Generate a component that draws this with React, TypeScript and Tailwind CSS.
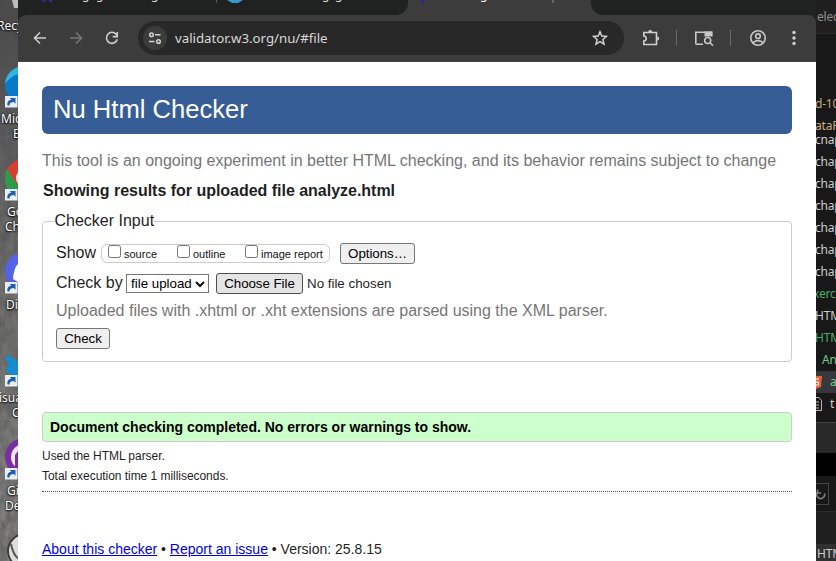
import type { ReactNode } from "react";

const arial = "font-['Liberation_Sans',Arial,sans-serif]";
const ui = "font-['Noto_Sans','Open_Sans',sans-serif]";

function Shortcut({ top, children, lines }: { top: number; children?: ReactNode; lines: { t: string; x: number; y: number }[] }) {
  return (
    <div className="absolute left-0 w-20" style={{ top }}>
      <svg className="absolute left-[5px] top-0 h-[44px] w-[40px]" viewBox="0 0 40 44">
        {children}
        <rect x="0" y="30" width="12.5" height="11.5" fill="#e8eef4" />
        <path d="M2.500 39.500c-.8-3.500 1-5.500 3.800-5.500L4.800 32h5.700v5.700L8.800 36c-2.300 0-4.300.8-4.300 3.500z" fill="#1f5fa8" />
      </svg>
      {lines.map((l) => (
        <span
          key={l.t}
          className={`${ui} absolute whitespace-nowrap text-[12px] leading-[14px] text-white [text-shadow:0_1px_2px_#000,0_0_2px_#000]`}
          style={{ left: l.x, top: l.y }}
        >
          {l.t}
        </span>
      ))}
    </div>
  );
}

function Desktop() {
  return (
    <aside className="relative h-full w-[18px] shrink-0 overflow-hidden bg-linear-to-b from-[#48484a] via-[#6a6a69] via-40% to-[#858482]">
      <svg className="absolute inset-0 h-full w-full">
        <filter id="stone" x="0" y="0" width="1" height="1">
          <feTurbulence type="fractalNoise" baseFrequency="0.14 0.07" numOctaves="5" seed="8" />
          <feColorMatrix values="0 0 0 0 .08  0 0 0 0 .08  0 0 0 0 .08  1.8 0 0 0 -0.55" />
        </filter>
        <rect width="18" height="561" filter="url(#stone)" opacity=".7" />
        <path d="M12 0h6v8h-4z" fill="#bdbdbd" />
      </svg>
      <Shortcut top={-60} lines={[{ t: "Recy", x: -3, y: 79 }]} />
      <Shortcut top={66} lines={[{ t: "Mic", x: 1, y: 46 }, { t: "E", x: 13, y: 61 }]}>
        <circle cx="19" cy="19" r="19" fill="#0a78c8" />
        <path d="M0 18A19 19 0 0 1 19 0v8C12 7 5 11 0 18z" fill="#31b5dc" />
      </Shortcut>
      <Shortcut top={159} lines={[{ t: "Go", x: 7, y: 46 }, { t: "Ch", x: 5, y: 61 }]}>
        <circle cx="19" cy="19" r="19" fill="#d93c30" />
        <path d="M2 10L13 27l-1 10A19 19 0 0 1 2 10z" fill="#2c9c4b" />
        <circle cx="20" cy="19" r="9" fill="#eee" />
      </Shortcut>
      <Shortcut top={252} lines={[{ t: "Di", x: 6, y: 46 }]}>
        <circle cx="19" cy="19" r="19" fill="#5462e8" />
        <path d="M8 27q1-12 5-15v18z" fill="#fff" />
      </Shortcut>
      <Shortcut top={345} lines={[{ t: "isua", x: -1, y: 46 }, { t: "C", x: 12, y: 61 }]}>
        <path d="M0 13l4-3 14 11v11H8L0 24l4-4z" fill="#168bd2" />
      </Shortcut>
      <Shortcut top={438} lines={[{ t: "Gi", x: 7, y: 46 }, { t: "De", x: 5, y: 61 }]}>
        <circle cx="19" cy="19" r="19" fill="#7a2fa0" />
        <circle cx="19" cy="19" r="13" fill="#eee5f2" />
        <path d="M10 30V17l3-4v20z" fill="#7a2fa0" />
      </Shortcut>
      <svg className="absolute left-[7px] top-[533px] h-[28px] w-[30px]" viewBox="0 0 30 28">
        <circle cx="18" cy="18" r="17" fill="#dedede" stroke="#3b3b3b" strokeWidth="2" />
        <path d="M4 11q2 11 8 15" fill="none" stroke="#555" strokeWidth="2" />
      </svg>
    </aside>
  );
}

// Only the descenders of the tab titles reach below the top edge.
function Title({ className }: { className: string }) {
  return <span className={`absolute -top-[13px] whitespace-nowrap ${className}`}>g</span>;
}

function TabStrip() {
  return (
    <div className={`${ui} flex h-[15px] w-full overflow-hidden bg-[#3c3c3c] text-[12px] leading-[16px] text-[#dedede]`}>
      <div className="h-[15px] w-[390px] shrink-0 bg-[#3c3c3c]">
        <div className="relative h-[15px] w-full overflow-hidden rounded-br-[12px] bg-[#1f2221]">
          <svg className="absolute left-[22px] top-0 h-[4px] w-[14px]" viewBox="0 0 14 4"><path d="M3 0h3L4 2H1zM9 0h3v3l-3-2z" fill="#2d2ba5" /></svg>
          <Title className="left-[64px]" />
          <Title className="left-[78px]" />
          <Title className="left-[133px]" />
          <div className="absolute left-[198px] top-0 h-[3px] w-px bg-[#55595a]" />
          <svg className="absolute left-[208px] top-0 h-[4px] w-[18px]" viewBox="0 0 18 4"><path d="M1 0h16l-5 3H6z" fill="#319bd0" /></svg>
          <Title className="left-[304px]" />
          <Title className="left-[317px]" />
        </div>
      </div>
      <div className="relative h-[15px] w-[183px] shrink-0 overflow-hidden">
        <svg className="absolute left-[10px] top-0 h-[3px] w-[10px]" viewBox="0 0 10 3"><path d="M2 0h6L5 3z" fill="#29298b" /></svg>
        <Title className="left-[72px] text-white" />
        <div className="absolute left-[144px] top-0 h-[3px] w-[2px] bg-[#666]" />
      </div>
      <div className="relative h-[15px] flex-1 rounded-bl-[12px] bg-[#1f2221]" />
    </div>
  );
}

function Toolbar() {
  return (
    <div className="bg-[#1f2221]">
      <div className="flex h-[47px] w-full items-center rounded-t-[8px] border-b border-[#4a4545] bg-[#3c3c3c]">
        <svg className="ml-[14px] h-[16px] w-[16px] shrink-0" viewBox="0 0 16 16" fill="none" stroke="#cfcfcf" strokeWidth="1.600"><path d="M14 8H2.500M8 2.500L2.500 8 8 13.500" /></svg>
        <svg className="ml-[20px] h-[16px] w-[16px] shrink-0" viewBox="0 0 16 16" fill="none" stroke="#777" strokeWidth="1.600"><path d="M2 8h11.500M8 2.500L13.500 8 8 13.500" /></svg>
        <svg className="ml-[20px] h-[16px] w-[16px] shrink-0" viewBox="0 0 16 16" fill="none" stroke="#cfcfcf" strokeWidth="1.600"><path d="M13.300 9.200A5.500 5.500 0 1 1 12.200 4.300L13.500 6M13.300 2v4.600H8.700" /></svg>
        <div className="ml-[18px] flex h-[34px] w-[486px] shrink-0 items-center rounded-full bg-[#282828]">
          <div className="ml-[5px] flex h-[24px] w-[24px] items-center justify-center rounded-full bg-[#3c3c3c]">
            <svg className="h-[14px] w-[14px]" viewBox="0 0 14 14" fill="none" stroke="#d2d2d2" strokeWidth="1.500"><circle cx="3.500" cy="3.800" r="1.800" /><path d="M7 3.800h5.500M1 10.500h5.500" /><circle cx="10.500" cy="10.500" r="1.800" /></svg>
          </div>
          <span className={`${ui} ml-[8px] w-[420px] whitespace-nowrap text-[13.300px] leading-[18px] tracking-[-0.04px] text-[#d8d8d8]`}>validator.w3.org/nu/#file</span>
          <svg className="-ml-[3px] h-[16px] w-[16px] shrink-0" viewBox="0 0 16 16" fill="none" stroke="#d0d0d0" strokeWidth="1.500"><path d="M8 1.700l1.800 4.300 4.700.4-3.600 3.100 1.100 4.600L8 11.600l-4 2.500 1.100-4.600L1.500 6.400l4.700-.4z" /></svg>
        </div>
        <svg className="ml-[18px] h-[18px] w-[18px] shrink-0" viewBox="0 0 18 18" fill="none" stroke="#cfcfcf" strokeWidth="1.600"><path d="M1.800 3.500h12.700v12H1.800v-3.500c3.200-.4 3.200-4.600 0-5z" /><path d="M6.200 2.900a2 2 0 0 1 4 0zM15.200 7.500a2 2 0 0 1 0 4z" fill="#cfcfcf" stroke="none" /></svg>
        <div className="ml-[16px] h-[16px] w-px bg-[#6a6a6a]" />
        <svg className="ml-[17px] h-[18px] w-[20px] shrink-0" viewBox="0 0 20 18" fill="none" stroke="#c8c8c8" strokeWidth="1.600"><path d="M9 15.200H2.800c-.5 0-1-.4-1-1V3.300h15.700V7" /><path d="M10.500 2.500h8v5h-8z" fill="#c8c8c8" stroke="none" /><circle cx="13.700" cy="11.500" r="3" /><path d="M16 13.700l3 3" /></svg>
        <div className="ml-[16px] h-[16px] w-px bg-[#6a6a6a]" />
        <svg className="ml-[18px] h-[18px] w-[18px] shrink-0" viewBox="0 0 18 18" fill="none" stroke="#c8c8c8" strokeWidth="1.600"><circle cx="9" cy="9" r="7.200" /><circle cx="9" cy="7.200" r="2.300" /><path d="M3.800 14c1.500-1.800 3.200-2.400 5.200-2.400s3.700.6 5.200 2.400" /></svg>
        <svg className="ml-[24px] h-[16px] w-[6px] shrink-0" viewBox="0 0 6 16" fill="#d0d0d0"><circle cx="3" cy="2.500" r="1.700" /><circle cx="3" cy="8" r="1.700" /><circle cx="3" cy="13.500" r="1.700" /></svg>
      </div>
    </div>
  );
}

function Button({ className, children }: { className: string; children: ReactNode }) {
  return <button className={`flex h-[21px] shrink-0 items-center justify-center whitespace-nowrap rounded-[3px] border text-[13.333px] leading-[16px] tracking-[-0.05px] text-black ${className}`}>{children}</button>;
}

function Check({ label, className }: { label: string; className: string }) {
  return (
    <label className={`flex h-full shrink-0 items-start ${className}`}>
      <span className="h-[13px] w-[13px] shrink-0 rounded-[2.500px] border border-[#767676] bg-white" />
      <span className="ml-[3px] mt-[3px] whitespace-nowrap text-[11px] leading-[13px] text-[#111]">{label}</span>
    </label>
  );
}

function Checker() {
  return (
    <main className={`${arial} h-[499px] bg-white pl-[24px] pr-[24px] pt-[24px] text-[16px] text-[#1f1f1f]`}>
      <h1 className="h-[48px] rounded-[6px] bg-[#365d95] pl-[11px] text-[25.600px] leading-[46px] text-white">Nu Html Checker</h1>
      <p className="mt-[17px] h-[20px] whitespace-nowrap leading-[20px] text-[#767676]">This tool is an ongoing experiment in better HTML checking, and its behavior remains subject to change</p>
      <h2 className="mt-[10px] h-[20px] whitespace-nowrap pl-px font-bold leading-[20px] tracking-[-0.02px]">Showing results for uploaded file analyze.html</h2>
      <fieldset className="mt-[11px] h-[150px] rounded-[4px] border border-[#ccc] px-[13px]">
        <legend className="-ml-[1.500px] h-[18px] leading-[17px]">Checker Input</legend>
        <div className="mt-[13px] flex h-[21px] items-center">
          <span className="-mt-[2px] w-[45px] leading-[20px]">Show</span>
          <div className="flex h-[19px] w-[229px] rounded-[6px] border border-[#ccc]">
            <Check label="source" className="ml-[6px] w-[69px]" />
            <Check label="outline" className="w-[68px]" />
            <Check label="image report" className="" />
          </div>
          <Button className="ml-[10px] w-[75px] border-[#767676] bg-[#efefef]">Options…</Button>
        </div>
        <div className="mt-[9px] flex h-[21px] items-center">
          <span className="-mt-[2px] w-[70px] whitespace-nowrap leading-[20px]">Check by</span>
          <div className="flex h-[19px] w-[83px] shrink-0 items-center border border-[#767676] bg-white pl-[4px] text-[13.333px] leading-[15px] text-black">
            <span className="w-[64px] whitespace-nowrap">file upload</span>
            <svg className="h-[10px] w-[10px]" viewBox="0 0 10 10" fill="none" stroke="#111" strokeWidth="2"><path d="M1 3l4 4 4-4" /></svg>
          </div>
          <Button className="ml-[7px] w-[87px] border-[#4f4f4f] bg-[#e5e5e5]">Choose File</Button>
          <span className="ml-[4px] whitespace-nowrap text-[13.333px] leading-[16px]">No file chosen</span>
        </div>
        <p className="mt-[7px] h-[20px] whitespace-nowrap leading-[20px] text-[#767676]">Uploaded files with .xhtml or .xht extensions are parsed using the XML parser.</p>
        <Button className="mt-[7px] w-[54px] border-[#767676] bg-[#efefef]">Check</Button>
      </fieldset>
      <p className="mt-[50px] h-[30px] rounded-[4px] border border-[#ccc] bg-[#ccffcc] pl-[7px] text-[14px] font-bold leading-[28px] text-black">Document checking completed. No errors or warnings to show.</p>
      <p className="mt-[6px] text-[12px] leading-[16px] tracking-[-0.04px]">Used the HTML parser.</p>
      <p className="mt-[4px] text-[12px] leading-[16px] tracking-[-0.04px]">Total execution time 1 milliseconds.</p>
      <div className="mt-[7px] border-t border-dotted border-[#555]" />
      <footer className="mt-[49px] whitespace-nowrap text-[14px] leading-[16px]">
        <a className="text-[#0000dd] underline">About this checker</a> • <a className="text-[#0000dd] underline">Report an issue</a> • Version: 25.8.15
      </footer>
    </main>
  );
}

function EditorLine({ text, className }: { text: string; className: string }) {
  return <div className={`h-[22px] shrink-0 whitespace-nowrap leading-[22px] ${className}`}>{text}</div>;
}

const chapters = [1, 2, 3, 4, 5, 6];

function Editor() {
  return (
    <aside className={`${ui} flex h-full w-[20px] shrink-0 flex-col overflow-hidden bg-[#181818] text-[12px] tracking-[-0.2px] text-[#ccc]`}>
      <div className="h-[34px] shrink-0 border-b border-[#2b2b2b] bg-[#1f1f1f] pl-px pt-[7px] leading-[20px] text-[#8d8d8d]">elec</div>
      <div className="h-[59px] shrink-0" />
      <EditorLine text="d-10" className="-ml-px text-[#c8aa7d]" />
      <EditorLine text="ataF" className="-ml-px text-[#c8aa7d]" />
      <div className="-ml-px flex h-[14px] shrink-0 items-end overflow-hidden"><span className="leading-[22px]">chap</span></div>
      {chapters.map((n) => <EditorLine key={n} text="chap" className="-ml-px" />)}
      <EditorLine text="xerc" className="-ml-[3px] text-[#46ae69]" />
      <EditorLine text="HTM" className="-ml-px" />
      <EditorLine text="HTM" className="-ml-px text-[#46ae69]" />
      <EditorLine text="An" className="pl-[6px] text-[#73c991]" />
      <div className="flex h-[22px] shrink-0 items-center bg-[#37373d] text-[#73c991]">
        <svg className="h-[13px] w-[6px] shrink-0" viewBox="0 0 6 13"><path d="M0 0h6L5 11l-5 2z" fill="#e36331" /><path d="M0 3h3M0 6h2.500v3H0" fill="none" stroke="#fff" /></svg>
        <span className="ml-[8px]">a</span>
      </div>
      <div className="flex h-[22px] shrink-0 items-center">
        <svg className="h-[14px] w-[6px] shrink-0" viewBox="0 0 6 14" fill="none" stroke="#b8b8b8"><path d="M0 .5h3l2.500 3v10H0M0 5h3M0 8h3M0 11h3" /></svg>
        <span className="ml-[8px]">t</span>
      </div>
      <div className="h-[8px] shrink-0 border-b border-[#444]" />
      <div className="h-[30px] shrink-0 bg-[#292929]" />
      <div className="h-[23px] shrink-0 bg-black" />
      <div className="h-[36px] shrink-0 border-b border-[#2b2b2b] pt-[7px]">
        <div className="flex h-[22px] w-[13px] items-center border border-l-0 border-[#454545]">
          <svg className="h-[12px] w-[10px]" viewBox="0 0 10 12" fill="none" stroke="#808080" strokeWidth="1.600"><path d="M2 3.500A4 4 0 1 0 8.500 5.500M1.500 1.500v3.500H5" transform="matrix(1 0 0 1 0 0)" /></svg>
        </div>
      </div>
      <div className="h-[32px] shrink-0 bg-[#1f1f1f]" />
      <div className="flex-1 bg-[#303030] pl-px leading-[19px]">HTM</div>
    </aside>
  );
}

export default function App() {
  return (
    <div className="flex h-[561px] w-[836px] overflow-hidden bg-[#181818]">
      <Desktop />
      <section className="w-[798px] shrink-0">
        <TabStrip />
        <Toolbar />
        <Checker />
      </section>
      <Editor />
    </div>
  );
}
